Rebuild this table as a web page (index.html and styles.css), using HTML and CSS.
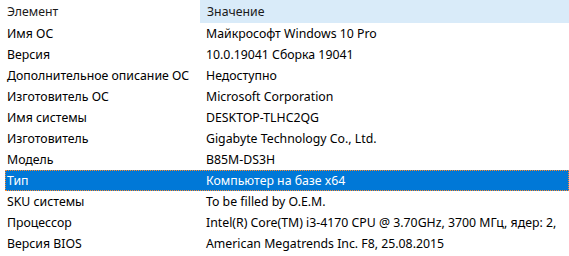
FILE: index.html
```html
<!DOCTYPE html>
<html lang="ru">
<head>
<meta charset="utf-8">
<title>Сведения о системе</title>
<link rel="stylesheet" href="styles.css">
</head>
<body>
<div class="list">
  <div class="header">
    <div class="hcol">Элемент</div>
    <div class="hcol sorted">Значение</div>
  </div>
  <div class="row"><div class="c1">Имя ОС</div><div class="c2">Майкрософт Windows 10 Pro</div></div>
  <div class="row"><div class="c1">Версия</div><div class="c2">10.0.19041 Сборка 19041</div></div>
  <div class="row"><div class="c1">Дополнительное описание ОС</div><div class="c2">Недоступно</div></div>
  <div class="row"><div class="c1">Изготовитель ОС</div><div class="c2">Microsoft Corporation</div></div>
  <div class="row"><div class="c1">Имя системы</div><div class="c2">DESKTOP-TLHC2QG</div></div>
  <div class="row"><div class="c1">Изготовитель</div><div class="c2">Gigabyte Technology Co., Ltd.</div></div>
  <div class="row"><div class="c1">Модель</div><div class="c2">B85M-DS3H</div></div>
  <div class="row selected"><div class="c1">Тип</div><div class="c2">Компьютер на базе x64</div></div>
  <div class="row"><div class="c1">SKU системы</div><div class="c2">To be filled by O.E.M.</div></div>
  <div class="row"><div class="c1">Процессор</div><div class="c2">Intel(R) Core(TM) i3-4170 CPU @ 3.70GHz, 3700 МГц, ядер: 2,</div></div>
  <div class="row"><div class="c1">Версия BIOS</div><div class="c2">American Megatrends Inc. F8, 25.08.2015</div></div>
</div>
</body>
</html>
```
FILE: styles.css
```css
html, body {
  margin: 0;
  padding: 0;
  background: #ffffff;
  overflow: hidden;
}

.list {
  width: 569px;
  height: 256px;
  overflow: hidden;
  font-family: "Noto Sans", "Open Sans", sans-serif;
  font-size: 12.3px;
  color: #000000;
  white-space: nowrap;
}

.header {
  display: grid;
  grid-template-columns: 200px 1fr;
  height: 23px;
}

.hcol {
  display: flex;
  align-items: center;
  padding-left: 7px;
  color: #1a1a1a;
}

.hcol.sorted {
  background: #d9ebf9;
}

.row {
  display: grid;
  grid-template-columns: 195px 1fr;
  height: 21px;
  margin-left: 5px;
  box-sizing: border-box;
  border: 1px solid transparent;
}

.c1, .c2 {
  display: flex;
  align-items: center;
  overflow: hidden;
}

.c1 {
  padding-left: 1px;
}

.c2 {
  padding-left: 5px;
}

.row.selected {
  background: #0078d7;
  color: #ffffff;
  border: 1px dotted #ff8a2a;
}
```
